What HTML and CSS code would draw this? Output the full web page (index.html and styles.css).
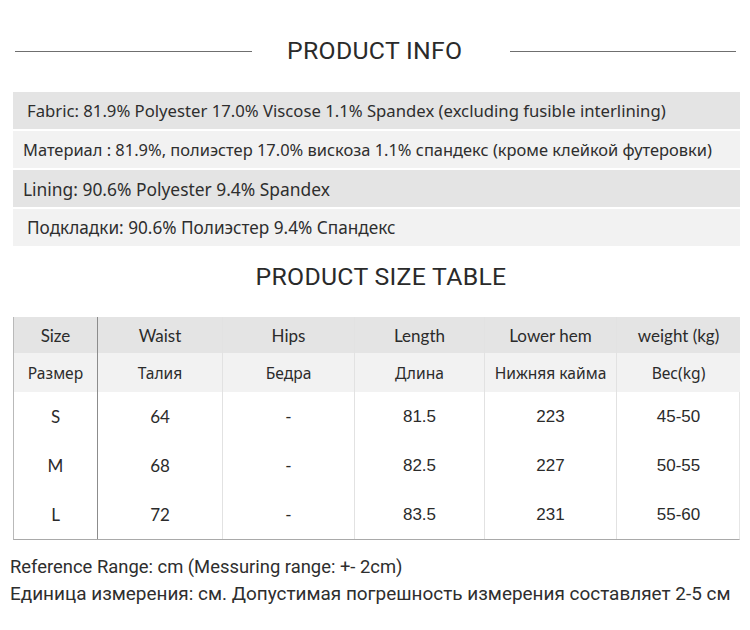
FILE: index.html
```html
<!DOCTYPE html>
<html>
<head>
<meta charset="utf-8">
<link rel="stylesheet" href="styles.css">
</head>
<body>
<div class="page">
  <div class="title-row">
    <span class="rule rule-left"></span>
    <h1 class="title">PRODUCT INFO</h1>
    <span class="rule rule-right"></span>
  </div>

  <div class="info">
    <div class="info-row dark pad-wide fs-a">Fabric: 81.9% Polyester 17.0% Viscose 1.1% Spandex (excluding fusible interlining)</div>
    <div class="info-row light pad-narrow fs-b">Материал : 81.9%, полиэстер 17.0% вискоза 1.1% спандекс (кроме клейкой футеровки)</div>
    <div class="info-row dark pad-narrow fs-c">Lining: 90.6% Polyester 9.4% Spandex</div>
    <div class="info-row light pad-wide fs-d">Подкладки: 90.6% Полиэстер 9.4% Спандекс</div>
  </div>

  <h2 class="title title-table">PRODUCT SIZE TABLE</h2>

  <div class="table">
    <div class="cell head c1">Size</div>
    <div class="cell head">Waist</div>
    <div class="cell head">Hips</div>
    <div class="cell head">Length</div>
    <div class="cell head">Lower hem</div>
    <div class="cell head">weight (kg)</div>

    <div class="cell sub c1">Размер</div>
    <div class="cell sub">Талия</div>
    <div class="cell sub">Бедра</div>
    <div class="cell sub">Длина</div>
    <div class="cell sub">Нижняя кайма</div>
    <div class="cell sub">Вес(kg)</div>

    <div class="cell data c1">S</div>
    <div class="cell data">64</div>
    <div class="cell data">-</div>
    <div class="cell data num">81.5</div>
    <div class="cell data num">223</div>
    <div class="cell data num">45-50</div>

    <div class="cell data c1">M</div>
    <div class="cell data">68</div>
    <div class="cell data">-</div>
    <div class="cell data num">82.5</div>
    <div class="cell data num">227</div>
    <div class="cell data num">50-55</div>

    <div class="cell data c1">L</div>
    <div class="cell data">72</div>
    <div class="cell data">-</div>
    <div class="cell data num">83.5</div>
    <div class="cell data num">231</div>
    <div class="cell data num">55-60</div>
  </div>

  <div class="notes">
    <p class="note note-1">Reference Range: cm (Messuring range: +- 2cm)</p>
    <p class="note note-2">Единица измерения: см. Допустимая погрешность измерения составляет 2-5 см</p>
  </div>
</div>
</body>
</html>
```

FILE: styles.css
```css
html, body {
  margin: 0;
  padding: 0;
  background: #ffffff;
}

.page {
  width: 750px;
  height: 630px;
  overflow: hidden;
  color: #2b2b2b;
  font-family: "Noto Sans", "DejaVu Sans", sans-serif;
}

.title-row {
  display: flex;
  align-items: center;
  height: 24px;
  margin-top: 39px;
  padding: 0 14px 0 15px;
}

.rule {
  height: 1px;
  background: #6f6f6f;
}

.rule-left {
  width: 237px;
  margin-right: 35px;
}

.rule-right {
  flex: 1;
  margin-left: 48px;
}

.title {
  margin: 0;
  font-family: "Roboto", "Liberation Sans", sans-serif;
  font-weight: 400;
  font-size: 24.8px;
  line-height: 24px;
  color: #2a2a2a;
  letter-spacing: 0.3px;
  white-space: nowrap;
}

.info {
  display: flex;
  flex-direction: column;
  gap: 2px;
  margin: 29px 10px 0 13px;
}

.info-row {
  height: 37px;
  display: flex;
  align-items: center;
  color: #2e2e2e;
  white-space: nowrap;
}

.fs-a { font-size: 16.7px; }
.fs-b { font-size: 16.45px; }
.fs-c { font-size: 17.4px; }
.fs-d { font-size: 17.2px; }

.dark { background: #e4e4e4; }
.light { background: #f2f2f2; }
.pad-wide { padding-left: 14px; }
.pad-narrow { padding-left: 10px; }

.title-table {
  text-align: center;
  height: 26px;
  line-height: 26px;
  margin-top: 18px;
  padding-left: 12px;
}

.table {
  display: grid;
  grid-template-columns: 84px 124px 132px 130px 132px 124px;
  grid-template-rows: 36px 39px 49px 49px 49px;
  margin: 27px 11px 0 13px;
  border-left: 1px solid #b9b9b9;
  border-right: 1px solid #e6e6e6;
  border-bottom: 1px solid #a9a9a9;
  width: 725px;
}

.cell {
  display: flex;
  align-items: center;
  justify-content: center;
  border-left: 1px solid #e2e2e2;
  font-family: "Lato", "Noto Sans", sans-serif;
  color: #2b2b2b;
  white-space: nowrap;
}

.c1 { border-left: none; border-right: 1px solid #8c8c8c; }
.c1 + .cell { border-left: none; }

.head {
  background: #e4e4e4;
  font-size: 17px;
}

.sub {
  background: #f2f2f2;
  font-family: "Noto Sans", sans-serif;
  font-size: 15.6px;
}

.data {
  font-size: 17px;
}

.num {
  font-family: "Liberation Sans", Arial, sans-serif;
  font-size: 17px;
}

.notes {
  margin: 13px 0 0 10px;
}

.note {
  margin: 0;
  height: 27px;
  line-height: 27px;
  font-family: "Roboto", "Liberation Sans", sans-serif;
  color: #2e2e2e;
  white-space: nowrap;
}

.note-1 { font-size: 18.4px; }
.note-2 { font-size: 18.95px; }
```
